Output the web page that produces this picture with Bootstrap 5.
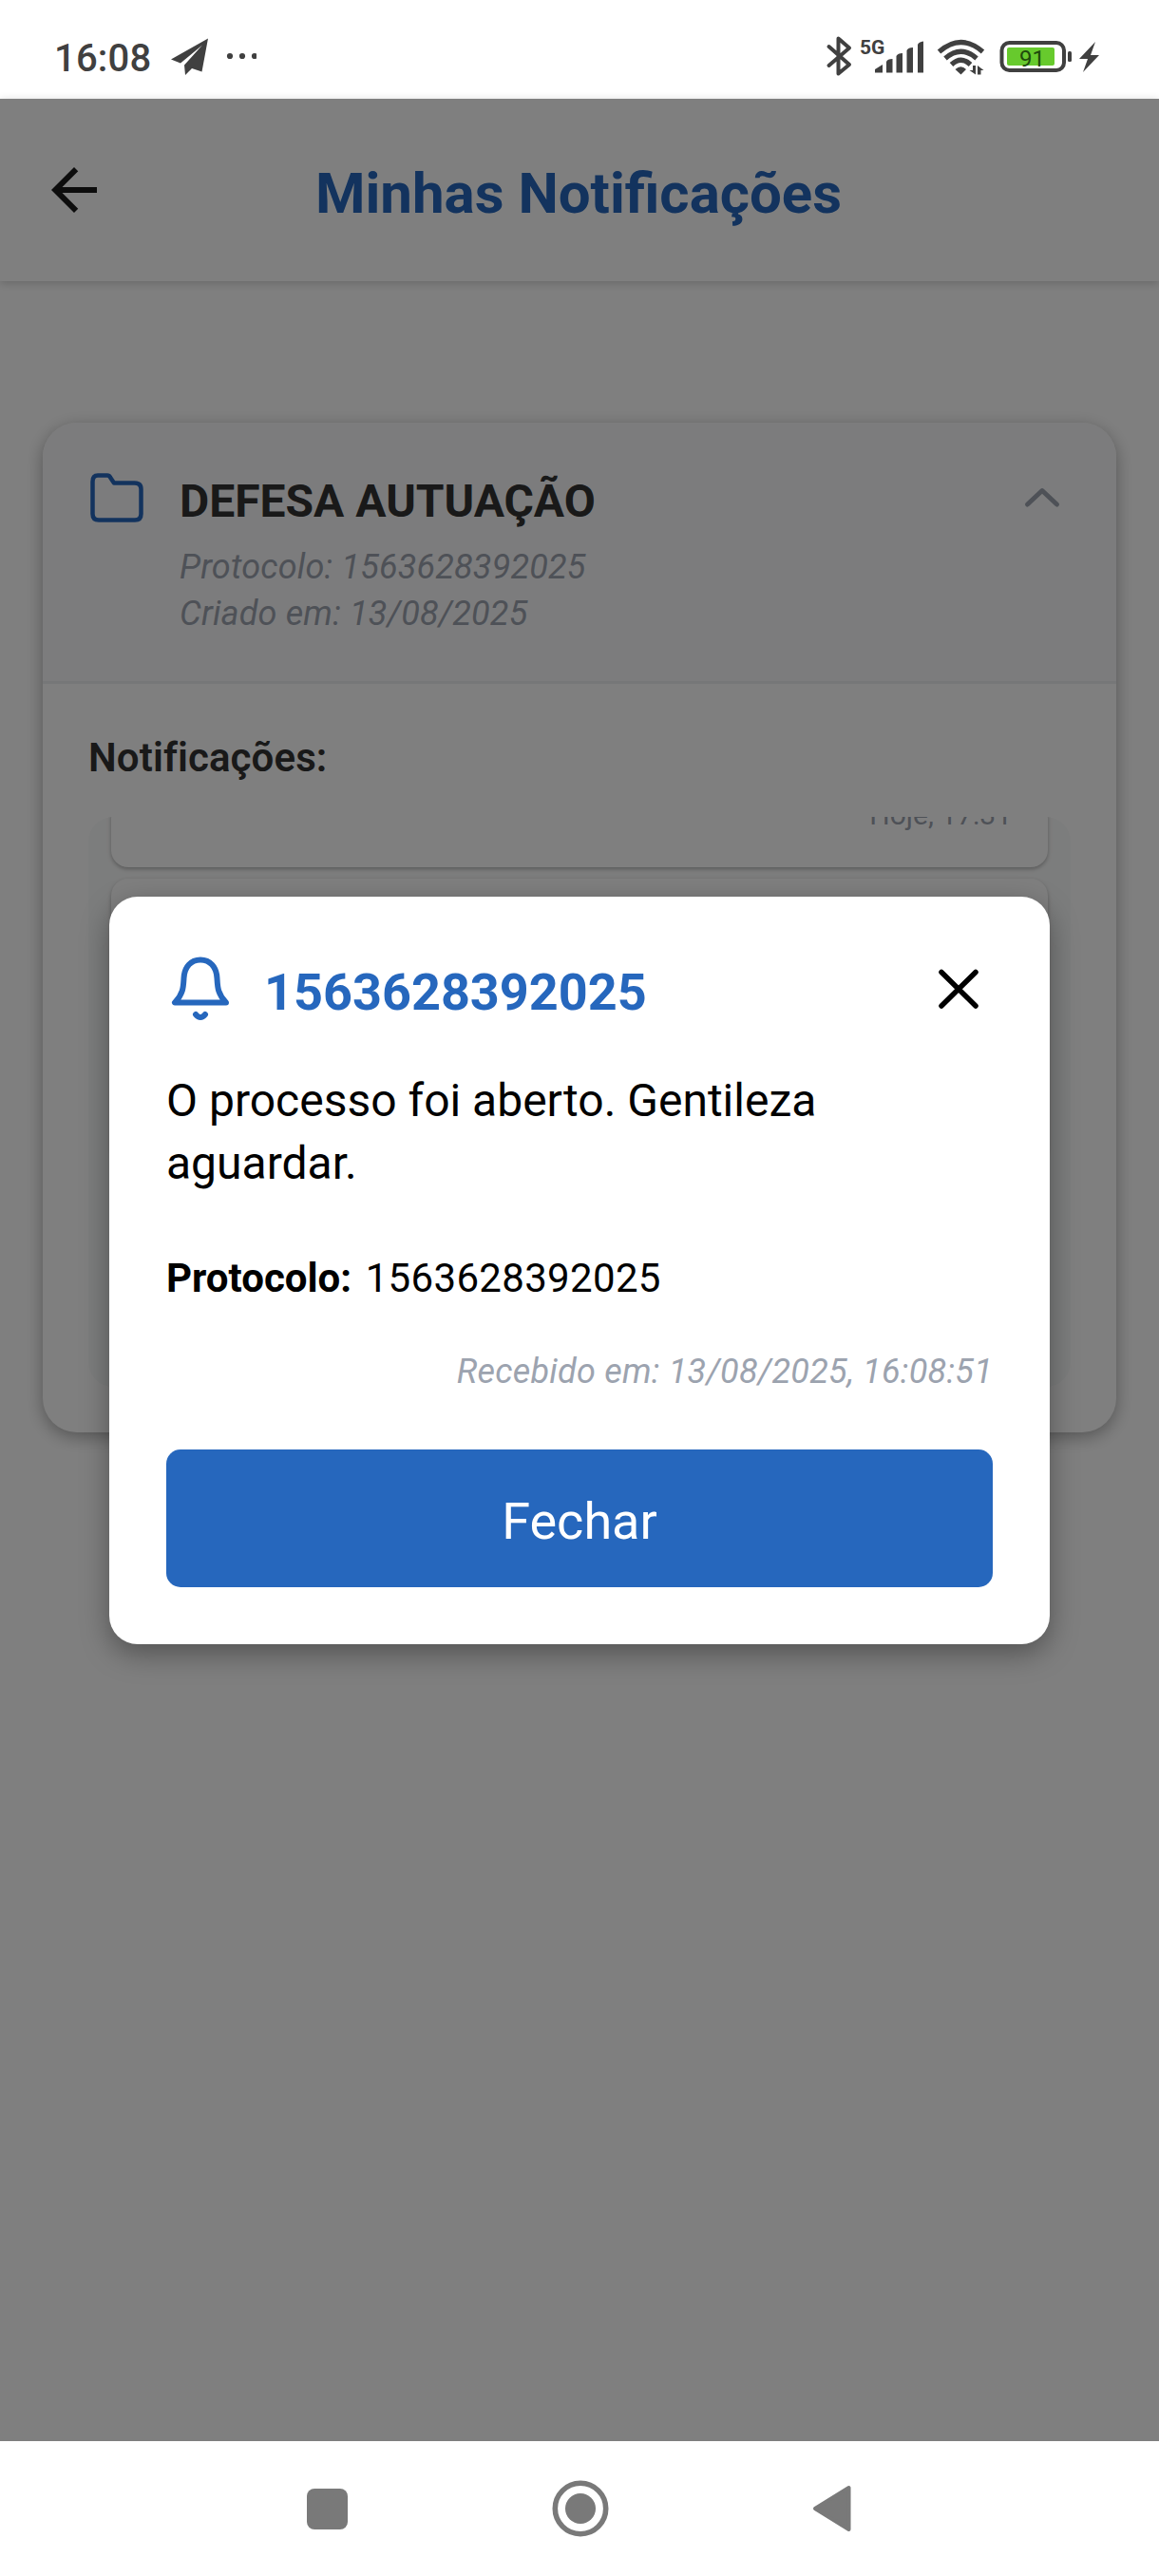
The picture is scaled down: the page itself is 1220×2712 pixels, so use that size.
<!DOCTYPE html>
<html lang="pt-BR">
<head>
<meta charset="utf-8">
<meta name="viewport" content="width=device-width, initial-scale=1">
<title>Minhas Notificações</title>
<link href="https://cdn.jsdelivr.net/npm/bootstrap@5.3.0/dist/css/bootstrap.min.css" rel="stylesheet">
<style>
  :root { --brand: #2667bd; --ink: #333; --soft: #9ca3af; }
  body { font-family: Roboto, "Noto Sans", sans-serif; width: 1220px; height: 2712px; background: #fff; overflow: hidden; }
  svg { display: block; flex: none; }
  .status-bar { height: 104px; color: #404040; padding: 0 62px 0 57px; }
  .status-clock { font-size: 40px; font-weight: 500; line-height: 48px; padding-top: 20px; letter-spacing: .2px; width: 113px; }
  .app-screen { height: 2466px; }
  .app-header { height: 192px; padding: 0 42px; box-shadow: 0 2px 9px rgba(0,0,0,.2); }
  .header-end { width: 74px; }
  .app-title { color: var(--brand); font-size: 60px; font-weight: 700; line-height: 70px; padding-top: 7px; }
  .process-card { margin: 148.5px 45px 0; height: 1063px; border: 0; border-radius: 36px; box-shadow: 0 5px 18px rgba(0,0,0,.33); }
  .process-head { height: 275px; background: #f9f9fa; border-bottom: 3px solid #eceef1; border-radius: 36px 36px 0 0; padding: 47px 48px 0; }
  .process-info { margin-left: 34px; }
  .process-name { color: var(--ink); font-size: 48px; font-weight: 700; line-height: 56px; padding-top: 8px; }
  .process-meta { color: var(--soft); font-size: 36px; line-height: 49px; font-style: italic; margin-top: 17px; letter-spacing: .17px; }
  .process-body { padding: 53px 48px 0; }
  .list-label { color: var(--ink); font-size: 42px; font-weight: 600; line-height: 50px; letter-spacing: .1px; }
  .notice-list { height: 600px; margin-top: 37.5px; background: #f9fafa; border-radius: 26px; padding: 0 24px; overflow: hidden; }
  .notice-item { background: #fff; border-radius: 18px; box-shadow: 0 2px 4px rgba(0,0,0,.28); }
  .notice-first { height: 220px; margin-top: -167px; padding: 0 38px 37px; }
  .notice-time { color: var(--soft); font-size: 30px; line-height: 36px; }
  .notice-second { height: 300px; margin-top: 12px; }
  .screen-dim { top: 104px; height: 2466px; background: rgba(0,0,0,.5); padding-top: 840px; }
  .notice-modal { width: 990px; height: 787px; border: 0; border-radius: 30px; padding: 60px; box-shadow: 0 10px 30px rgba(0,0,0,.35); color: #000; }
  .notice-title { color: var(--brand); font-size: 54px; font-weight: 700; line-height: 64px; margin-left: 31px; padding-top: 4px; }
  .notice-text { font-size: 48px; line-height: 66px; margin-top: 44.5px; }
  .notice-protocol { font-size: 42px; line-height: 50px; margin-top: 63px; gap: 14.5px; }
  .protocol-number { letter-spacing: .33px; }
  .notice-received { color: var(--soft); font-size: 36px; line-height: 44px; font-style: italic; margin-top: 51px; letter-spacing: .24px; }
  .btn-brand, .btn-brand:hover { background: var(--brand); color: #fff; border: 0; border-radius: 15px; height: 145px; font-size: 54px; line-height: 64px; margin-top: 60.5px; padding: 6px 0 0; }
  .system-nav { height: 142px; padding: 0 323px; }
</style>
</head>
<body class="d-flex flex-column position-relative">

<div class="status-bar d-flex align-items-center">
  <span class="status-clock">16:08</span>
  <svg width="100" height="104" viewBox="170 0 100 104" fill="#404040">
    <path d="M219 40.500 L180 62.500 L190 66.500 L213 47.500 L194 68.500 L195 79 L202 72 L212.500 75.500 Z"/>
    <circle cx="242" cy="59" r="3.100"/><circle cx="255" cy="59" r="3.100"/><circle cx="268" cy="59" r="3.100"/>
  </svg>
  <svg class="ms-auto" width="290" height="104" viewBox="868 0 290 104" fill="#404040">
    <path d="M872.500 49 L894 68 L882.500 77.500 V40.500 L894 50.500 L872.500 69" fill="none" stroke="#404040" stroke-width="4" stroke-linejoin="round" stroke-linecap="round"/>
    <text x="905" y="57" font-family="Roboto" font-size="21" font-weight="700">5G</text>
    <path d="M921 73 L929 68 V76.500 H921Z M933 65 Q934 62 939.500 62 V76.500 H933Z M943.500 59 Q945 56 950 56 V76.500 H943.500Z M954.500 53 Q956 50 961 50 V76.500 H954.500Z M966 47 Q967 44 972 43.500 V76.500 H966Z"/>
    <g fill="none" stroke="#404040" stroke-width="5.200">
      <path d="M988.500 54.500 Q1011.500 34.500 1034.500 54.500"/>
      <path d="M995 61.500 Q1011.500 47 1028 61.500"/>
      <path d="M1001.500 68 Q1011.500 58.500 1021.500 68"/>
    </g>
    <path d="M1005.500 73 Q1011.500 67.500 1017 73 L1011.500 78.500Z"/>
    <path d="M1024 69 H1027 V78.500 L1020.500 74 H1024Z M1029 78.500 V69 L1035.500 74 H1032.500 V78.500Z"/>
    <rect x="1054.500" y="45" width="65.500" height="29" rx="8" fill="none" stroke="#404040" stroke-width="4"/>
    <rect x="1060" y="50" width="50" height="19" rx="2" fill="#67ca2d"/>
    <rect x="1124" y="54" width="4" height="11" rx="1.500"/>
    <text x="1073" y="69.500" font-family="Roboto" font-size="24" fill="#1f4a0c">91</text>
    <path d="M1153 44 L1136 62 H1145 L1140 76 L1157 58 H1148Z"/>
  </svg>
</div>

<main class="app-screen">
  <header class="app-header d-flex align-items-center bg-white">
    <svg width="72" height="72" viewBox="0 0 24 24" fill="#1a1a1a"><path d="M20 11H7.830l5.590-5.590L12 4l-8 8 8 8 1.410-1.410L7.830 13H20v-2z"/></svg>
    <h1 class="app-title flex-grow-1 text-center mb-0">Minhas Notificações</h1>
    <span class="header-end"></span>
  </header>

  <section class="card process-card">
    <div class="process-head d-flex align-items-start">
      <svg width="62" height="72" viewBox="0 0 62 72" fill="none" stroke="#2667bd" stroke-width="4.500" stroke-linejoin="round"><path d="M10 8.500 H20 Q22 8.500 23 10.500 L27 16.500 H48.500 Q55.500 16.500 55.500 23 V49 Q55.500 55.500 49 55.500 H11 Q4.500 55.500 4.500 49 V15 Q4.500 8.500 10 8.500Z"/></svg>
      <div class="process-info flex-grow-1">
        <h2 class="process-name mb-0">DEFESA AUTUAÇÃO</h2>
        <div class="process-meta">Protocolo: 1563628392025<br>Criado em: 13/08/2025</div>
      </div>
      <svg width="60" height="60" viewBox="0 0 60 60" fill="none" stroke="#9ca3af" stroke-width="5" stroke-linecap="round" stroke-linejoin="round"><path d="M14.500 39 L30 24.500 L45.500 39"/></svg>
    </div>
    <div class="process-body">
      <h3 class="list-label mb-0">Notificações:</h3>
      <div class="notice-list">
        <div class="notice-item notice-first d-flex align-items-end justify-content-end"><span class="notice-time">Hoje, 17:31</span></div>
        <div class="notice-item notice-second"></div>
      </div>
    </div>
  </section>
</main>

<div class="screen-dim position-absolute start-0 w-100">
  <div class="card notice-modal mx-auto" role="dialog" aria-modal="true">
    <div class="d-flex align-items-center">
      <svg width="72" height="77" viewBox="0 0 72 77" fill="none" stroke="#2667bd" stroke-width="6" stroke-linejoin="round" stroke-linecap="round"><path d="M9 51.500 H63 C54 42 54 35 53.500 26 C53 14 46 6.500 36 6.500 S19 14 18.500 26 C18 35 18 42 9 51.500Z"/><path d="M31 64 Q36 70 41 64"/></svg>
      <h2 class="notice-title mb-0">1563628392025</h2>
      <svg class="ms-auto" width="72" height="72" viewBox="0 0 72 72" stroke="#000" stroke-width="5.500" stroke-linecap="round"><path d="M18 16.500 L54 52 M54 16.500 L18 52"/></svg>
    </div>
    <p class="notice-text mb-0">O processo foi aberto. Gentileza aguardar.</p>
    <div class="notice-protocol d-flex"><strong>Protocolo:</strong><span class="protocol-number">1563628392025</span></div>
    <div class="notice-received text-end">Recebido em: 13/08/2025, 16:08:51</div>
    <button type="button" class="btn btn-brand w-100">Fechar</button>
  </div>
</div>

<nav class="system-nav d-flex align-items-center justify-content-between bg-white">
  <svg width="43" height="43" viewBox="0 0 43 43" fill="#797979"><rect width="43" height="43" rx="8"/></svg>
  <svg width="60" height="60" viewBox="0 0 60 60" fill="#797979"><circle cx="30" cy="30" r="26.700" fill="none" stroke="#797979" stroke-width="5.600"/><circle cx="30" cy="30" r="16"/></svg>
  <svg width="42" height="50" viewBox="0 0 42 50" fill="#797979" stroke="#797979" stroke-width="4" stroke-linejoin="round"><path d="M3 25 L38.500 3 V47Z"/></svg>
</nav>

<script src="https://cdn.jsdelivr.net/npm/bootstrap@5.3.0/dist/js/bootstrap.bundle.min.js"></script>
</body>
</html>
